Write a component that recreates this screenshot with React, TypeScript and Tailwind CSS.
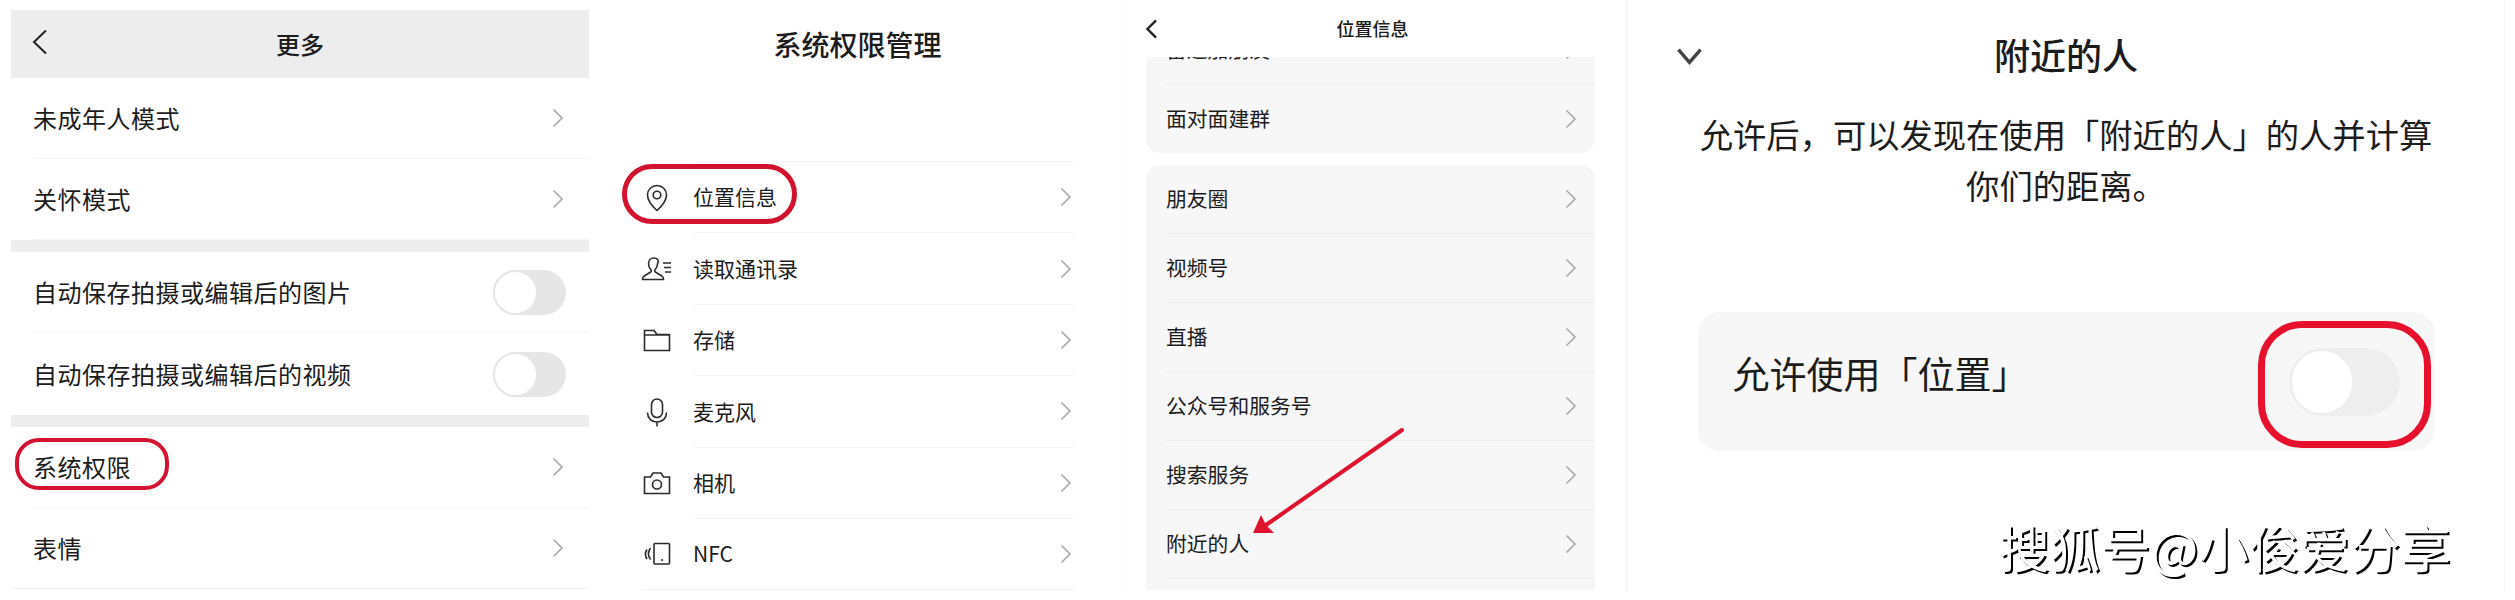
import type { ReactNode } from "react";

function Chevron({ className }: { className: string }) {
  return (
    <svg viewBox="0 0 12 20" fill="none" className={className}>
      <path d="M1.5 1.5 10 10l-8.5 8.5" stroke="#a9a9a9" strokeWidth="1.6" />
    </svg>
  );
}

function Toggle() {
  return (
    <div className="flex h-[45px] w-[73px] items-center rounded-full bg-[#e6e6e6]">
      <div className="h-[45px] w-[45px] rounded-full border-2 border-[#e6e6e6] bg-white" />
    </div>
  );
}

function MoreRow({ label, toggle, last }: { label: string; toggle?: boolean; last?: boolean }) {
  return (
    <div
      className={
        last
          ? "ml-[22px] flex h-[82px] items-center justify-between pr-[23px] text-[24px] tracking-[0.5px]"
          : "ml-[22px] flex h-[81px] items-center justify-between border-b border-[#f4f4f4] pr-[23px] text-[24px] tracking-[0.5px]"
      }
    >
      <span>{label}</span>
      {toggle ? <Toggle /> : <Chevron className="mr-[2px] h-[20px] w-[12px]" />}
    </div>
  );
}

function MorePanel() {
  return (
    <section className="relative h-[593px] w-[600px] shrink-0 pt-[10px] pl-[11px]">
      <div className="w-[578px] border-b border-[#f1f1f1]">
        <header className="relative flex h-[68px] items-center justify-center bg-[#ededed] text-[24px] font-medium">
          <svg viewBox="0 0 16 26" fill="none" className="absolute top-[19px] left-[21px] h-[26px] w-[16px]">
            <path d="M14 1.5 2 13l12 11.5" stroke="#222222" strokeWidth="2" />
          </svg>
          <span>更多</span>
        </header>
        <MoreRow label="未成年人模式" />
        <MoreRow label="关怀模式" />
        <div className="h-[12px] bg-[#ededed]" />
        <MoreRow label="自动保存拍摄或编辑后的图片" toggle />
        <MoreRow label="自动保存拍摄或编辑后的视频" toggle last />
        <div className="h-[12px] bg-[#ededed]" />
        <MoreRow label="系统权限" />
        <div className="ml-[22px] flex h-[80px] items-center justify-between pr-[23px] text-[24px] tracking-[0.5px]">
          <span>表情</span>
          <Chevron className="mr-[2px] h-[20px] w-[12px]" />
        </div>
      </div>
      <div className="absolute top-[438px] left-[15px] h-[52px] w-[154px] rounded-[24px] border-4 border-[#d2122e]" />
    </section>
  );
}

const iconStroke = { stroke: "#2b2b2b", strokeWidth: 1.6, fill: "none" };

const PinIcon = (
  <svg viewBox="0 0 32 32" className="h-[32px] w-[32px]">
    <path d="M16 28.5C11 24 6.5 18.5 6.5 13a9.5 9.5 0 0 1 19 0c0 5.500-4.500 11-9.500 15.500Z" {...iconStroke} />
    <circle cx="16" cy="13" r="3.800" {...iconStroke} />
  </svg>
);

const ContactIcon = (
  <svg viewBox="0 0 32 32" className="h-[32px] w-[32px]">
    <path d="M13 5c-3.500 0-5.500 2.600-5.500 5.800 0 2.700 1 4.600 2.500 6 .6.6.4 1.700-.3 2.200l-6.500 4c-1.300.8-1.700 1.500-1.700 3.500h21c0-2-.4-2.700-1.700-3.500l-6.500-4c-.7-.5-.9-1.600-.3-2.200 1.500-1.400 2.500-3.300 2.500-6C18.500 7.600 16.500 5 13 5Z" {...iconStroke} />
    <path d="M22 10h8M23 14.500h7M24 19h6" {...iconStroke} />
  </svg>
);

const FolderIcon = (
  <svg viewBox="0 0 32 32" className="h-[32px] w-[32px]">
    <path d="M3.500 6.500h9.500l3 4h12.500v16h-25Z M3.500 11h25" {...iconStroke} />
  </svg>
);

const MicIcon = (
  <svg viewBox="0 0 32 32" className="h-[32px] w-[32px]">
    <rect x="10.500" y="3" width="11" height="18.500" rx="5.500" {...iconStroke} />
    <path d="M6.500 16.500c0 5.500 4 9.500 9.500 9.500s9.500-4 9.500-9.500M16 26v4.500" {...iconStroke} />
  </svg>
);

const CameraIcon = (
  <svg viewBox="0 0 32 32" className="h-[32px] w-[32px]">
    <path d="M3.500 10h6l2.500-4h8l2.500 4h6v16.500h-25Z" {...iconStroke} />
    <circle cx="16" cy="17.500" r="4.500" {...iconStroke} />
  </svg>
);

const NfcIcon = (
  <svg viewBox="0 0 32 32" className="h-[32px] w-[32px]">
    <rect x="13" y="5.500" width="15.500" height="20.500" rx="1" {...iconStroke} />
    <circle cx="21" cy="22" r="1.100" fill="#2b2b2b" />
    <path d="M9.500 10c-2.500 3.500-2.500 8 0 11.500M6 11.500c-2 3-2 6.500 0 9.500" {...iconStroke} />
  </svg>
);

function PermissionRow({ icon, label, last }: { icon: ReactNode; label: string; last?: boolean }) {
  if (last) {
    return (
      <div className="ml-[41px] flex h-[71.400px] items-center border-b border-[#f3f3f3]">
        <div className="w-[32px]">{icon}</div>
        <div className="ml-[20px] flex flex-1 items-center justify-between text-[21px]">
          <span>{label}</span>
          <Chevron className="mr-[3px] h-[20px] w-[12px]" />
        </div>
      </div>
    );
  }
  return (
    <div className="ml-[41px] flex h-[71.400px] items-center">
      <div className="w-[32px]">{icon}</div>
      <div className="ml-[20px] flex h-full flex-1 items-center justify-between border-b border-[#f3f3f3] text-[21px]">
        <span>{label}</span>
        <Chevron className="mr-[3px] h-[20px] w-[12px]" />
      </div>
    </div>
  );
}

function PermissionPanel() {
  return (
    <section className="relative h-[593px] w-[526px] shrink-0 border-r border-[#f8f8f8]">
      <div className="flex h-[161px] justify-center pt-[25px] pr-[10px] text-[28px] leading-[38px] font-medium">
        <h1 className="h-fit">系统权限管理</h1>
      </div>
      <div className="mr-[50px]">
        <div className="ml-[93px] h-px bg-[#f3f3f3]" />
        <PermissionRow icon={PinIcon} label="位置信息" />
        <PermissionRow icon={ContactIcon} label="读取通讯录" />
        <PermissionRow icon={FolderIcon} label="存储" />
        <PermissionRow icon={MicIcon} label="麦克风" />
        <PermissionRow icon={CameraIcon} label="相机" />
        <PermissionRow icon={NfcIcon} label="NFC" last />
      </div>
      <div className="absolute top-[164px] left-[22px] h-[60px] w-[175px] rounded-[30px] border-[5px] border-[#d2122e]" />
    </section>
  );
}

function ServiceRow({ label, last }: { label: string; last?: boolean }) {
  return (
    <div
      className={
        last
          ? "ml-[20px] flex h-[68px] shrink-0 items-center justify-between pr-[18px] text-[20.8px]"
          : "ml-[20px] flex h-[69px] shrink-0 items-center justify-between border-b border-[#ececec] pr-[18px] text-[20.8px]"
      }
    >
      <span>{label}</span>
      <Chevron className="h-[20px] w-[12px]" />
    </div>
  );
}

function LocationPanel() {
  return (
    <section className="relative h-[593px] w-[500px] shrink-0 overflow-hidden border-r border-[#f6f6f6]">
      <header className="relative flex h-[57px] items-center justify-center pr-[6px] text-[18px] font-medium">
        <svg viewBox="0 0 14 22" fill="none" className="absolute top-[19px] left-[19px] h-[20px] w-[13px]">
          <path d="M12 1.500 2.500 11l9.500 9.500" stroke="#222222" strokeWidth="2.600" />
        </svg>
        <span>位置信息</span>
      </header>
      <div className="ml-[20px] w-[449px]">
        <div className="flex h-[96px] flex-col justify-end overflow-hidden rounded-b-[14px] bg-[#f7f7f7]">
          <ServiceRow label="雷达加朋友" />
          <ServiceRow label="面对面建群" last />
        </div>
        <div className="mt-[12px] h-[425px] rounded-t-[14px] bg-[#f7f7f7]">
          <ServiceRow label="朋友圈" />
          <ServiceRow label="视频号" />
          <ServiceRow label="直播" />
          <ServiceRow label="公众号和服务号" />
          <ServiceRow label="搜索服务" />
          <ServiceRow label="附近的人" />
        </div>
      </div>
      <svg viewBox="0 0 500 593" className="absolute inset-0 h-[593px] w-[500px]" fill="none">
        <path d="M276 430 140 525" stroke="#e0132f" strokeWidth="4" strokeLinecap="round" />
        <path d="M127 533 135 515 140 525 148 533Z" fill="#e0132f" />
      </svg>
    </section>
  );
}

function NearbyPanel() {
  return (
    <section className="relative ml-px h-[593px] w-[878px] shrink-0 border-x border-[#f6f6f6]">
      <header className="relative flex h-[109px] items-center justify-center pb-[2px] text-[36px] font-medium">
        <svg viewBox="0 0 30 20" fill="none" className="absolute top-[48px] left-[47px] h-[17px] w-[29px]">
          <path d="M2 2l13 15L28 2" stroke="#444444" strokeWidth="4" />
        </svg>
        <span>附近的人</span>
      </header>
      <p className="mx-auto w-[740px] text-center text-[33.3px] leading-[50.5px]">
        允许后，可以发现在使用「附近的人」的人并计算你们的距离。
      </p>
      <div className="mx-auto mt-[102px] flex h-[139px] w-[737px] items-center justify-between rounded-[22px] bg-[#f7f7f7] px-[35px]">
        <span className="pb-[16px] text-[37px]">允许使用「位置」</span>
        <div className="flex h-[68px] w-[111px] items-center rounded-full bg-[#eeeeee] pl-[3px]">
          <div className="h-[62px] w-[60px] rounded-full bg-white" />
        </div>
      </div>
      <div className="absolute top-[321px] left-[630px] h-[127px] w-[173px] rounded-[44px] border-[7px] border-[#e8112d]" />
      <div className="absolute top-[512px] left-[371px] text-[50.5px] leading-[68px] text-white [text-shadow:2px_2px_0_#000]">
        搜狐号@小俊爱分享
      </div>
    </section>
  );
}

export default function App() {
  return (
    <div className="flex h-[600px] w-[2515px] overflow-hidden bg-white font-['Noto_Sans_CJK_SC',sans-serif] text-[#1c1c1c]">
      <MorePanel />
      <PermissionPanel />
      <LocationPanel />
      <NearbyPanel />
    </div>
  );
}
